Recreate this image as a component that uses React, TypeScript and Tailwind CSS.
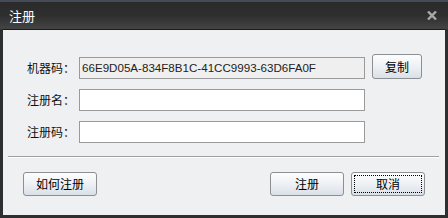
const cjk = { fontFamily: '"Noto Sans CJK SC", "Liberation Sans", sans-serif' };

function Btn({ label, focus = false, w = 'w-[74px]', h = 'h-[24px]' }: { label: string; focus?: boolean; w?: string; h?: string }) {
  return (
    <button
      className={`${w} ${h} shrink-0 rounded-[3px] border border-[#8c8f93] bg-gradient-to-b from-[#fdfdfd] via-[#eef1f4] to-[#d9e0e7] p-[2px] text-[12px] leading-none text-black`}
      style={cjk}
    >
      <span
        className={`flex h-full w-full items-center justify-center ${
          focus ? 'border border-dotted border-black' : 'border border-transparent'
        }`}
      >
        {label}
      </span>
    </button>
  );
}

function Field({ label, value, readOnly = false }: { label: string; value?: string; readOnly?: boolean }) {
  return (
    <div className="flex items-center">
      <span className="w-[52px] shrink-0 text-[12px] leading-none text-[#111]" style={cjk}>
        {label}
      </span>
      <div
        className={`flex h-[22px] w-[286px] shrink-0 items-center border border-[#9a9a9a] px-[2px] text-[11.6px] text-[#222] ${
          readOnly ? 'bg-[#efefef]' : 'bg-white'
        }`}
        style={{ fontFamily: '"Liberation Sans", sans-serif' }}
      >
        {value}
      </div>
    </div>
  );
}

export default function App() {
  return (
    <div className="flex h-[218px] w-[448px] flex-col bg-[#2e2e2e]">
      {/* title bar */}
      <div className="flex h-[29px] shrink-0 items-center justify-between border-t-2 border-[#454b57] bg-gradient-to-b from-[#2a2a2a] via-[#2f2f2f] to-[#444444] pl-[9px] pr-[11px]">
        <span className="text-[13px] leading-none text-white" style={cjk}>
          注册
        </span>
        <svg width="10" height="9" viewBox="0 0 10 9">
          <path d="M1 0.5 L9 8.5 M9 0.5 L1 8.5" stroke="#a8a8a8" strokeWidth="2.4" />
        </svg>
      </div>

      {/* body */}
      <div className="mx-[3px] mb-[3px] flex flex-1 flex-col border-t border-[#1c1c1c] bg-[#eff0f2]">
        <div className="flex flex-col gap-[10px] pl-[24px] pt-[24px]">
          <div className="flex items-end gap-[7px]">
            <Field label="机器码：" value="66E9D05A-834F8B1C-41CC9993-63D6FA0F" readOnly />
            <Btn label="复制" w="w-[50px]" h="h-[25px]" />
          </div>
          <Field label="注册名：" />
          <Field label="注册码：" />
        </div>

        <div className="ml-[5px] mr-[6px] mt-[13px] border-t border-[#a0a0a0] border-b border-b-white" />

        <div className="flex items-center justify-between px-[20px] pt-[14px]">
          <Btn label="如何注册" />
          <div className="flex gap-[7px]">
            <Btn label="注册" />
            <Btn label="取消" focus />
          </div>
        </div>
      </div>
    </div>
  );
}
